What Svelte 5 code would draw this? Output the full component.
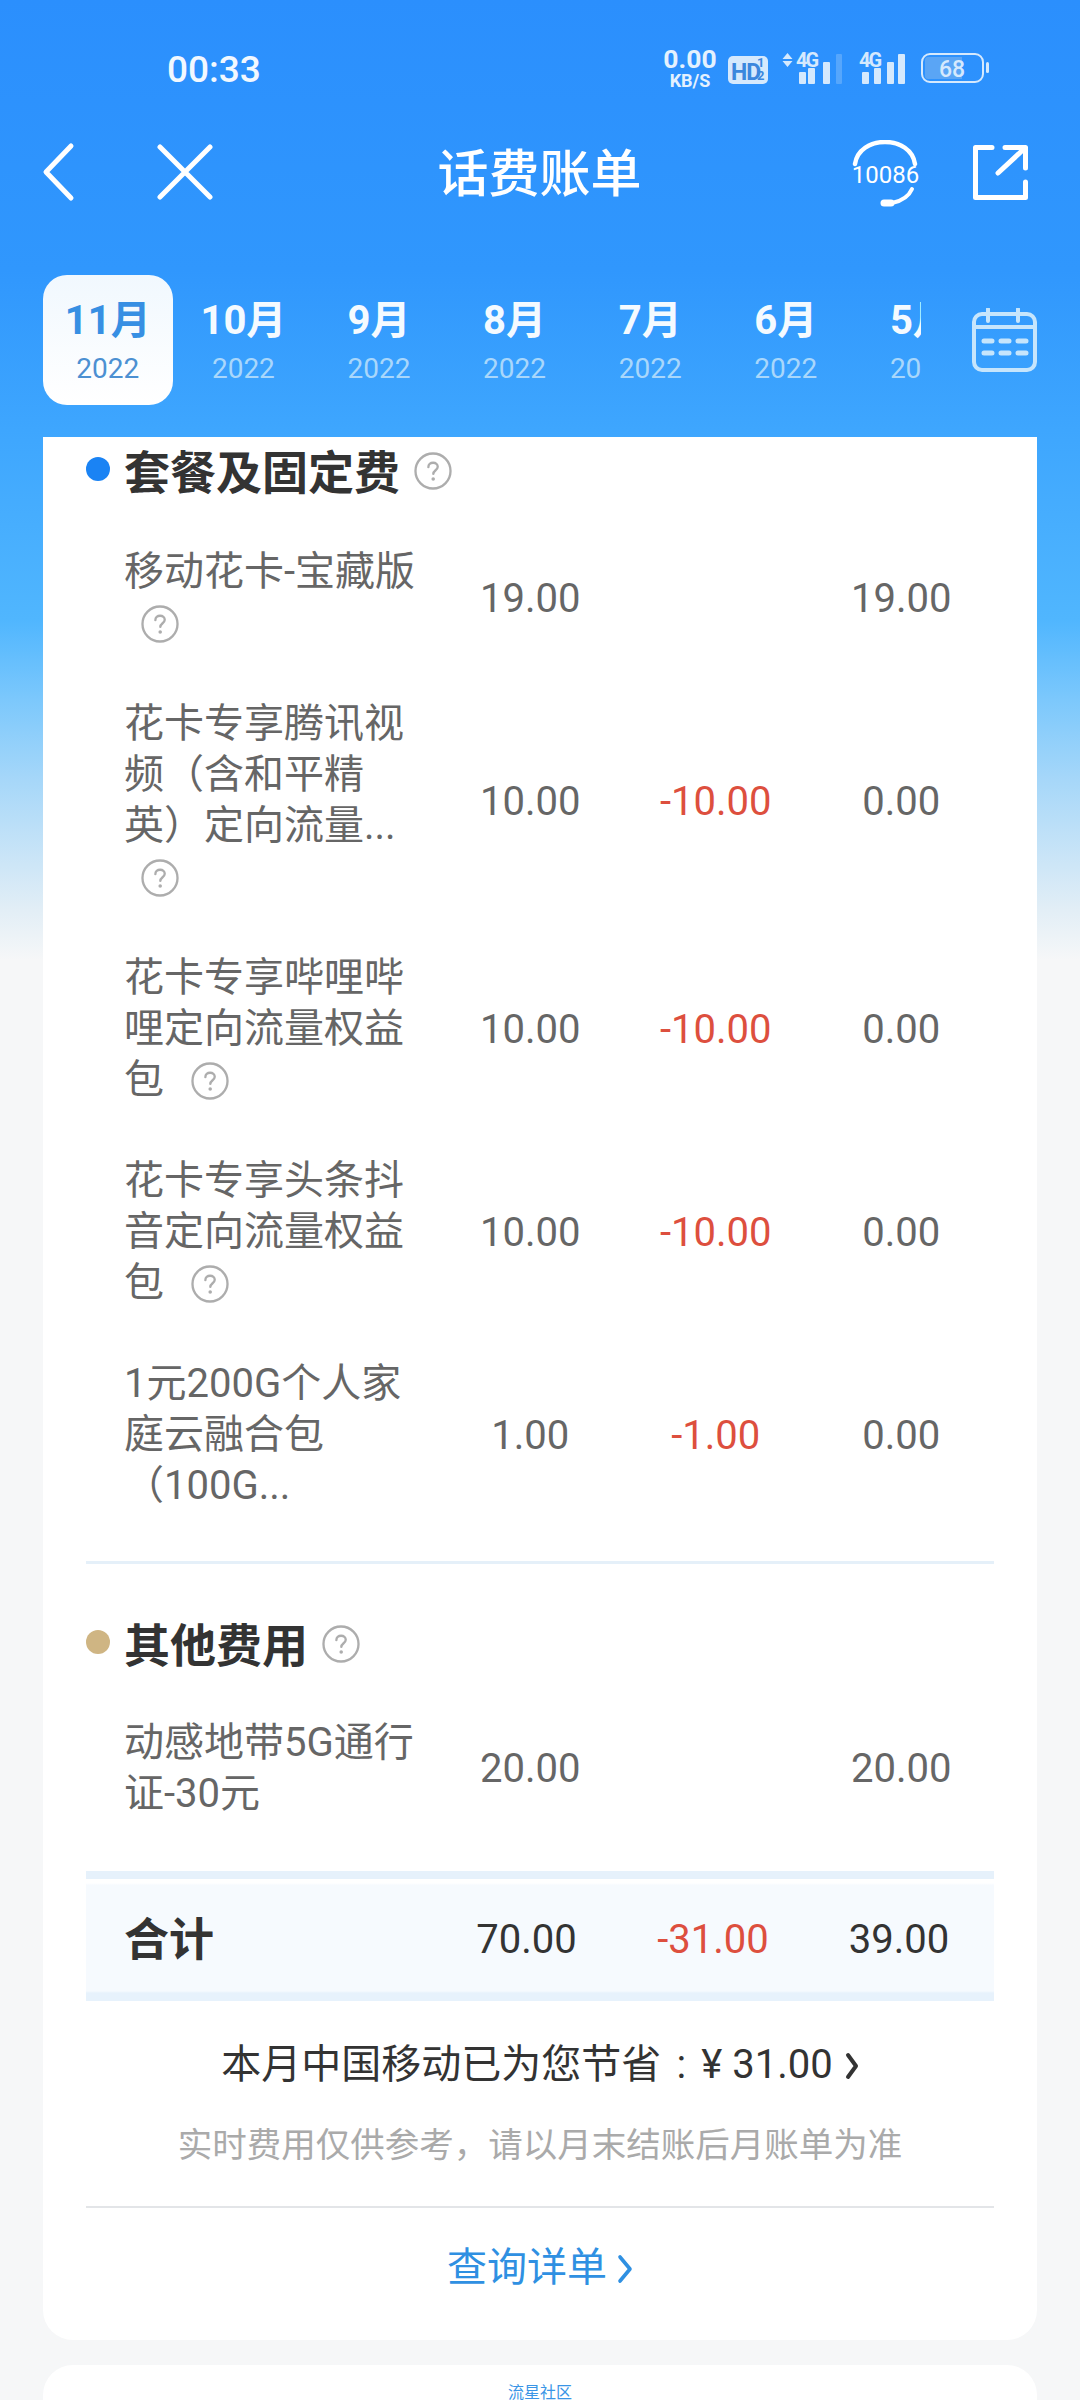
<script lang="ts">
  const months = ['11月', '10月', '9月', '8月', '7月', '6月', '5月'];

  const packageRows = [
    { name: '移动花卡-宝藏版', help: true, fee: '19.00', cut: '', paid: '19.00' },
    { name: '花卡专享腾讯视频（含和平精英）定向流量...', help: true, fee: '10.00', cut: '-10.00', paid: '0.00' },
    { name: '花卡专享哔哩哔哩定向流量权益包', help: true, fee: '10.00', cut: '-10.00', paid: '0.00' },
    { name: '花卡专享头条抖音定向流量权益包', help: true, fee: '10.00', cut: '-10.00', paid: '0.00' },
    { name: '1元200G个人家庭云融合包（100G...', help: false, fee: '1.00', cut: '-1.00', paid: '0.00' }
  ];

  const otherRows = [
    { name: '动感地带5G通行证-30元', help: false, fee: '20.00', cut: '', paid: '20.00' }
  ];
</script>

{#snippet helpIcon()}
  <svg class="help" viewBox="0 0 36 36" aria-hidden="true">
    <circle cx="18" cy="18" r="16.6" fill="none" stroke="#adadad" stroke-width="2.2" />
    <path d="M13.6 14.4c0-2.6 2-4.2 4.5-4.2s4.4 1.5 4.4 3.8c0 3.2-4.2 3.4-4.2 6.8" fill="none" stroke="#adadad" stroke-width="2.2" stroke-linecap="round" />
    <circle cx="18.2" cy="25.6" r="1.7" fill="#adadad" />
  </svg>
{/snippet}

{#snippet feeRow(row)}
  <div class="row">
    <div class="name">{row.name} {#if row.help}{@render helpIcon()}{/if}</div>
    <div class="num">{row.fee}</div>
    <div class="num red">{row.cut}</div>
    <div class="num">{row.paid}</div>
  </div>
{/snippet}

<div class="page">
  <header class="status">
    <span class="time">00:33</span>
    <svg class="status-icons" viewBox="0 0 342 44" aria-hidden="true">
      <text class="speed" x="42" y="20" text-anchor="middle">0.00</text>
      <text class="unit" x="42" y="39" text-anchor="middle">KB/S</text>
      <rect x="80" y="8" width="40" height="28" rx="5" fill="#d5e9fd" />
      <text class="hd" x="83" y="32">HD</text>
      <text class="hd-frac" x="109" y="19">1</text>
      <text class="hd-frac" x="109" y="32">2</text>
      <path d="M139.500 5l5 6h-10zM139.500 19l5-6h-10z" fill="#d5e9fd" />
      <text class="net" x="148" y="19">4G</text>
      <g fill="#d5e9fd">
        <rect x="151" y="24" width="7" height="12" rx="1" />
        <rect x="160" y="20" width="7" height="16" rx="1" />
        <rect x="175" y="14" width="7" height="22" rx="1" />
        <rect x="188" y="6" width="6" height="30" rx="1" opacity=".25" />
      </g>
      <text class="net" x="211" y="19">4G</text>
      <g fill="#d5e9fd">
        <rect x="214" y="24" width="7" height="12" rx="1" />
        <rect x="226" y="20" width="7" height="16" rx="1" />
        <rect x="239" y="14" width="7" height="22" rx="1" />
        <rect x="250" y="6" width="7" height="30" rx="1" />
      </g>
      <rect x="274" y="6" width="61" height="28" rx="8" fill="none" stroke="#d5e9fd" stroke-width="2" />
      <path d="M280 9h34v22h-34a3 3 0 0 1-3-3v-16a3 3 0 0 1 3-3z" fill="#5aa5f5" />
      <text class="batt" x="304" y="29" text-anchor="middle">68</text>
      <rect x="338" y="14" width="3" height="11" rx="1.500" fill="#d5e9fd" />
    </svg>
  </header>

  <nav class="nav">
    <div class="nav-left">
      <svg class="back" viewBox="0 0 33 60" aria-hidden="true">
        <path d="M29 4L4 30l25 26" fill="none" stroke="#fff" stroke-width="5" stroke-linecap="round" stroke-linejoin="round" />
      </svg>
      <svg class="close" viewBox="0 0 56 56" aria-hidden="true">
        <path d="M3 3l50 50M53 3L3 53" fill="none" stroke="#fff" stroke-width="5" stroke-linecap="round" />
      </svg>
    </div>
    <h1>话费账单</h1>
    <div class="nav-right">
      <svg class="hotline" viewBox="0 0 74 68" aria-hidden="true">
        <path d="M7 24C9 10 22 2 37 2s28 8 30 22" fill="none" stroke="#fff" stroke-width="4.500" stroke-linecap="round" />
        <text x="37.500" y="43" text-anchor="middle">10086</text>
        <path d="M64 49c-3 7-10 12-20 14" fill="none" stroke="#fff" stroke-width="4" stroke-linecap="round" />
        <path d="M36 63h7" fill="none" stroke="#fff" stroke-width="7" stroke-linecap="round" />
      </svg>
      <svg class="share" viewBox="0 0 56 56" aria-hidden="true">
        <path d="M20 3.500H3.500v50h50V38" fill="none" stroke="#fff" stroke-width="5" stroke-linecap="round" stroke-linejoin="round" />
        <path d="M26 29L53 4M33 3.500h20.500V24" fill="none" stroke="#fff" stroke-width="5" stroke-linecap="round" stroke-linejoin="round" />
      </svg>
    </div>
  </nav>

  <div class="tabs">
    <div class="tab-scroll">
      {#each months as month, i}
        <div class="tab" class:active={i === 0}>
          <span class="month">{month}</span>
          <span class="year">2022</span>
        </div>
      {/each}
    </div>
    <svg class="calendar" viewBox="0 0 66 66" aria-hidden="true">
      <rect x="3" y="6" width="61" height="56" rx="8" fill="none" stroke="#c6e5fc" stroke-width="4" />
      <path d="M3 19h61M17 1v12M47 1v12" fill="none" stroke="#c6e5fc" stroke-width="4" stroke-linecap="round" />
      <path d="M13 33h8M30 33h8M47 33h8M13 45h8M30 45h8M47 45h8" fill="none" stroke="#c6e5fc" stroke-width="5" stroke-linecap="round" />
    </svg>
  </div>

  <main class="card bill">
    <section class="group">
      <h2><i class="dot"></i>套餐及固定费{@render helpIcon()}</h2>
      {#each packageRows as row}
        {@render feeRow(row)}
      {/each}
    </section>

    <section class="group other">
      <h2><i class="dot gold"></i>其他费用{@render helpIcon()}</h2>
      {#each otherRows as row}
        {@render feeRow(row)}
      {/each}
    </section>

    <div class="total">
      <strong>合计</strong>
      <div class="num dark">70.00</div>
      <div class="num red">-31.00</div>
      <div class="num dark">39.00</div>
    </div>

    <p class="saved">
      本月中国移动已为您节省<span class="colon">:</span>¥ 31.00
      <svg class="chev" viewBox="0 0 14 28" aria-hidden="true">
        <path d="M3 3l8 11-8 11" fill="none" stroke="#333" stroke-width="4" stroke-linecap="round" stroke-linejoin="round" />
      </svg>
    </p>
    <p class="note">实时费用仅供参考，请以月末结账后月账单为准</p>

    <a class="detail" href="#detail">
      查询详单
      <svg class="chev" viewBox="0 0 16 30" aria-hidden="true">
        <path d="M3 3l10 12L3 27" fill="none" stroke="#2f90e2" stroke-width="3.600" stroke-linecap="round" stroke-linejoin="round" />
      </svg>
    </a>
  </main>

  <div class="card community">流星社区</div>
</div>

<style>
  :global(body) {
    background: #f6f7f8;
  }

  .page {
    height: 2400px;
    overflow: hidden;
    font-family: Roboto, 'Noto Sans CJK SC', sans-serif;
    text-spacing-trim: space-all;
    background: linear-gradient(
      180deg,
      #2b8ffd 0,
      #3097fd 270px,
      #3ea6fe 430px,
      #50b6fe 620px,
      #7cc8fc 700px,
      #a6d7f9 780px,
      #e2eef6 910px,
      #f6f7f8 960px
    );
  }

  .status {
    display: flex;
    align-items: center;
    justify-content: space-between;
    height: 136px;
    padding: 0 90px 0 167px;
    box-sizing: border-box;
  }

  .time {
    margin-top: 2px;
    font-size: 37px;
    font-weight: 500;
    color: #f2f8ff;
  }

  .status-icons {
    width: 342px;
    height: 44px;
    margin-top: 4px;
  }

  .speed { font: 700 26.500px Roboto, sans-serif; fill: #e4f1fe; }
  .unit { font: 700 18px Roboto, sans-serif; fill: #e4f1fe; }
  .hd { font: 700 23px Roboto, sans-serif; fill: #3b87dd; letter-spacing: -1px; }
  .hd-frac { font: 700 13px Roboto, sans-serif; fill: #3b87dd; }
  .net { font: 700 20px Roboto, sans-serif; fill: #d5e9fd; letter-spacing: -2px; }
  .batt { font: 500 23px Roboto, sans-serif; fill: #d5e9fd; }

  .nav {
    display: grid;
    grid-template-columns: 1fr auto 1fr;
    align-items: center;
    height: 72px;
    padding: 0 43px 0 42px;
  }

  .nav-left,
  .nav-right {
    display: flex;
    align-items: center;
  }

  .nav-left { gap: 82px; }
  .nav-right { justify-content: flex-end; gap: 50px; padding-right: 9px; }

  .back { width: 33px; height: 60px; }
  .close { width: 56px; height: 56px; }
  .hotline { width: 74px; height: 68px; margin-top: 3px; }
  .share { width: 56px; height: 56px; }

  .hotline text {
    font: 400 24px Roboto, sans-serif;
    fill: #fff;
  }

  h1 {
    margin: 5px 0 0;
    font-size: 51px;
    font-weight: 500;
    line-height: 60px;
    color: #fff;
  }

  .tabs {
    display: flex;
    align-items: center;
    height: 130px;
    margin: 67px 43px 32px 40px;
    gap: 50px;
  }

  .tab-scroll {
    display: flex;
    width: 881px;
    overflow: hidden;
    flex-shrink: 0;
  }

  .tab {
    flex: 0 0 135.600px;
    display: flex;
    flex-direction: column;
    align-items: center;
    height: 130px;
    padding-top: 23px;
    box-sizing: border-box;
    white-space: nowrap;
  }

  .tab.active {
    flex: 0 0 130px;
    margin: 0 2.800px;
    border-radius: 24px;
    background: linear-gradient(180deg, #f1f8fe, #fff);
  }

  .month {
    font-size: 40px;
    font-weight: 700;
    line-height: 46px;
    color: #f4faff;
  }

  .year {
    font-size: 28px;
    line-height: 34px;
    margin-top: 8px;
    color: #a9d7fb;
  }

  .active .month { color: #378fe3; }
  .active .year { color: #4c90d2; }

  .calendar {
    width: 66px;
    height: 66px;
    flex-shrink: 0;
    margin-top: 2px;
  }

  .card {
    margin: 0 43px;
    background: #fff;
  }

  .bill {
    height: 1903px;
    padding: 0 43px;
    border-radius: 0 0 30px 30px;
    box-sizing: border-box;
  }

  .group {
    padding-bottom: 25px;
  }

  .other {
    border-top: 3px solid #e5f0f9;
    padding: 46px 0 27px;
  }

  h2 {
    display: flex;
    align-items: center;
    height: 64px;
    margin: 0 0 20px;
    font-size: 46px;
    font-weight: 700;
    color: #333;
  }

  .other h2 {
    margin-bottom: 17.500px;
  }

  .dot {
    width: 24px;
    height: 24px;
    margin-right: 14px;
    border-radius: 50%;
    background: #1a83f4;
  }

  .gold {
    background: #cfb583;
  }

  h2 .help {
    width: 38px;
    height: 38px;
    margin-left: 14px;
    margin-top: 4px;
  }

  .row {
    display: grid;
    grid-template-columns: 351.500px repeat(3, 185.500px);
    align-items: center;
    padding: 25px 0;
  }

  .row .num {
    margin-top: 2px;
  }

  .name {
    width: 300px;
    margin-left: 38px;
    font-size: 40px;
    line-height: 51px;
    color: #666;
  }

  .help {
    display: inline-block;
    width: 38px;
    height: 38px;
    margin-left: 17px;
    vertical-align: -7px;
  }

  .num {
    font-size: 40px;
    text-align: center;
    color: #666;
  }

  .red,
  .row .red {
    color: #dd4f3e;
  }

  .num.dark {
    color: #333;
  }

  .total {
    display: grid;
    grid-template-columns: 347px 187px 186px 186px;
    align-items: center;
    height: 122px;
    padding-right: 2px;
    border-top: 8px solid #e6f1fb;
    background: linear-gradient(180deg, #fff 0, #fff 4px, #f6fafe 6px, #f6fafe 112px, #e7f2fc 114px);
  }

  .total strong {
    padding: 0 0 6px 38px;
    font-size: 45px;
    font-weight: 700;
    color: #333;
  }

  .saved {
    margin: 34px 0 0;
    text-align: center;
    font-size: 40px;
    line-height: 60px;
    color: #333;
  }

  .colon {
    display: inline-block;
    width: 40px;
  }

  .note {
    margin: 25px 0 0;
    padding-bottom: 36px;
    border-bottom: 2px solid #e3e5e8;
    text-align: center;
    font-size: 34.500px;
    line-height: 50px;
    color: #aaa;
  }

  .chev {
    display: inline-block;
    width: 14px;
    height: 28px;
    margin-left: 2px;
    vertical-align: -2px;
  }

  .detail {
    display: block;
    margin-top: 32px;
    text-align: center;
    font-size: 40px;
    line-height: 56px;
    color: #2f90e2;
    text-decoration: none;
  }

  .detail .chev {
    width: 16px;
    height: 30px;
    margin-left: 0;
    vertical-align: -3px;
  }

  .community {
    height: 60px;
    margin-top: 25px;
    padding-top: 18px;
    box-sizing: border-box;
    border-radius: 30px 30px 0 0;
    text-align: center;
    font-size: 16px;
    line-height: 20px;
    color: #3a95e6;
  }
</style>
